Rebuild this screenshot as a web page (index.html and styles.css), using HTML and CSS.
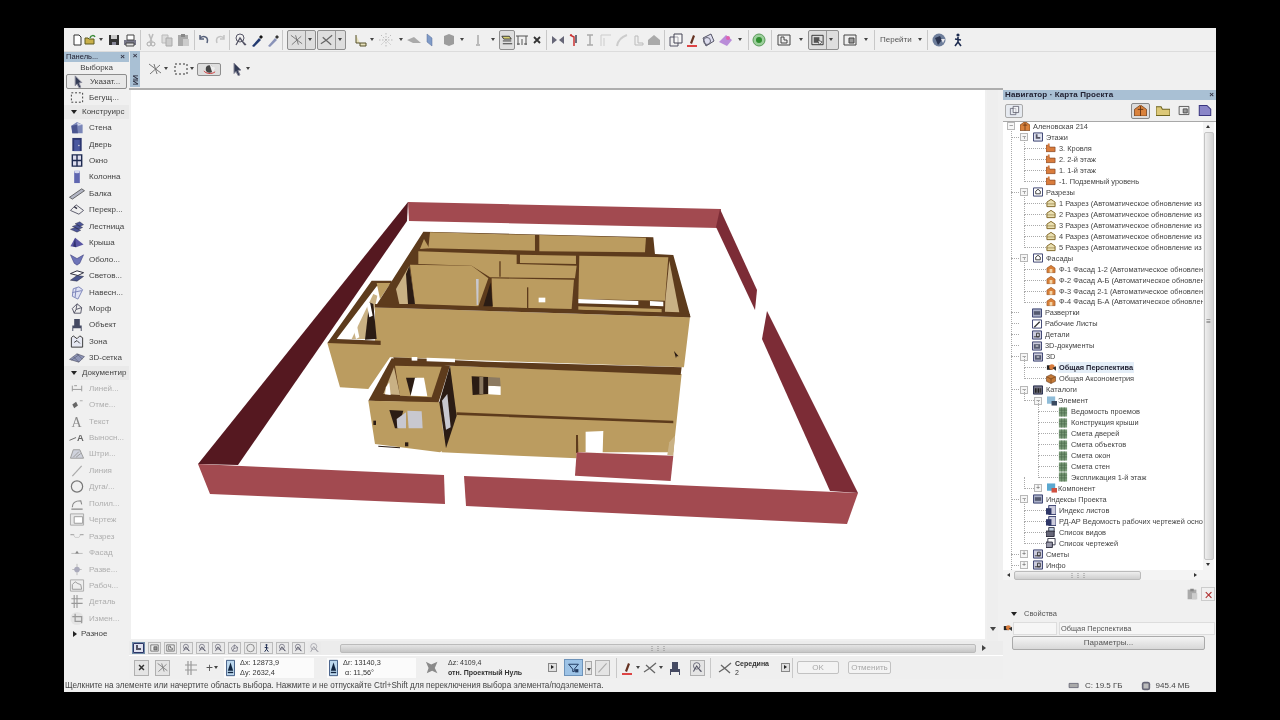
FILE: index.html
```html
<!DOCTYPE html>
<html lang="ru">
<head>
<meta charset="utf-8">
<title>ARCHICAD</title>
<link rel="stylesheet" href="styles.css">
</head>
<body>
<svg class="defs" width="0" height="0" aria-hidden="true">
<defs>
<symbol id="new" viewBox="0 0 16 16"><path d="M5 3h5l2 2v8H5z" fill="#fff" stroke="#333"/></symbol>
<symbol id="open" viewBox="0 0 16 16"><path d="M3 12V6h3l1 1h5v5z" fill="#c9b04a" stroke="#5d5a20"/><path d="M8 6c1-3 4-3 5-1" fill="none" stroke="#3a8a3a" stroke-width="1.5"/></symbol>
<symbol id="save" viewBox="0 0 16 16"><path d="M3 3h10v10H3z" fill="#333"/><path d="M5 3h6v4H5z" fill="#ccc"/><path d="M6 10h4v3H6z" fill="#889"/></symbol>
<symbol id="print" viewBox="0 0 16 16"><path d="M2 8h12v5H2z" fill="#778"/><path d="M5 3h7v5H5z" fill="#fff" stroke="#444"/><path d="M4 11h8v3H4z" fill="#ddd" stroke="#444"/></symbol>
<symbol id="cut" viewBox="0 0 16 16"><path d="M6 2l3 8M10 2L7 10" stroke="#bbb" stroke-width="1.5"/><circle cx="6" cy="12" r="2" fill="none" stroke="#aaa"/><circle cx="10" cy="12" r="2" fill="none" stroke="#aaa"/></symbol>
<symbol id="copy" viewBox="0 0 16 16"><path d="M3 3h6v8H3z" fill="#ddd" stroke="#bbb"/><path d="M7 6h6v8H7z" fill="#ccc" stroke="#aaa"/></symbol>
<symbol id="paste" viewBox="0 0 16 16"><path d="M3 3h10v11H3z" fill="#aaa"/><path d="M6 2h4v3H6z" fill="#888"/><path d="M8 7h6v7H8z" fill="#ccc"/></symbol>
<symbol id="undo" viewBox="0 0 16 16"><path d="M4 6c4-3 9-1 7 5M4 3v4h4" fill="none" stroke="#56607a" stroke-width="1.5"/></symbol>
<symbol id="redo" viewBox="0 0 16 16"><path d="M12 6C8 3 3 5 5 11M12 3v4H8" fill="none" stroke="#c4c4c4" stroke-width="1.5"/></symbol>
<symbol id="find" viewBox="0 0 16 16"><circle cx="7" cy="6" r="4" fill="none" stroke="#556"/><path d="M3 13l4-7 5 7M9 9l4 4" fill="none" stroke="#556" stroke-width="1.3"/></symbol>
<symbol id="pick" viewBox="0 0 16 16"><path d="M3 14l7-8 2 2-7 7z" fill="#223a70"/><path d="M10 5l2-2 2 2-2 2z" fill="#111"/></symbol>
<symbol id="pick2" viewBox="0 0 16 16"><path d="M3 14l7-8 2 2-7 7z" fill="#8a93b8"/><path d="M10 5l2-2 2 2-2 2z" fill="#333"/></symbol>
<symbol id="sel1" viewBox="0 0 16 16"><path d="M2 3l12 9M3 13L13 4M7 3l3 10" stroke="#777" fill="none"/></symbol>
<symbol id="sel2" viewBox="0 0 16 16"><path d="M2 12l6-4 6-5M4 5l9 8" stroke="#666" fill="none" stroke-width="1.3"/></symbol>
<symbol id="bb1" viewBox="0 0 16 16"><path d="M3 3v8h10v3H7v-3" fill="#e6e0bb" stroke="#55502a"/></symbol>
<symbol id="dots" viewBox="0 0 16 16"><path d="M8 1v14M1 8h14M3 3l10 10M13 3L3 13" stroke="#bbb" stroke-dasharray="1.5 1.5"/></symbol>
<symbol id="par" viewBox="0 0 16 16"><path d="M1 8l7-3 7 6H7z" fill="#aaa"/></symbol>
<symbol id="blue" viewBox="0 0 16 16"><path d="M5 2l5 4v8l-5-4z" fill="#7f9bc8" stroke="#5a6f98" stroke-width=".5"/></symbol>
<symbol id="cube" viewBox="0 0 16 16"><path d="M3 4l5-2 5 2v8l-5 2-5-2z" fill="#9c9c9c"/></symbol>
<symbol id="orbit" viewBox="0 0 16 16"><circle cx="8" cy="8" r="4" fill="#444"/><path d="M8 3l6 4-3 5z" fill="#eee"/><path d="M2 10c2 3 8 4 12 1" fill="none" stroke="#c33"/></symbol>
<symbol id="tiny" viewBox="0 0 16 16"><path d="M8 3v10M6 13h4" stroke="#bbb" stroke-width="2"/></symbol>
<symbol id="layer" viewBox="0 0 16 16"><path d="M2 4h8l2 3H4zM3 9h9M3 12h10" fill="#d8d070" stroke="#333"/></symbol>
<symbol id="frame" viewBox="0 0 16 16"><path d="M2 4h12M4 4v9M12 4v9M8 7v6" stroke="#555" fill="none"/><path d="M3 12h3M10 12h3" stroke="#555"/></symbol>
<symbol id="xx" viewBox="0 0 16 16"><path d="M5 5l6 6M11 5l-6 6" stroke="#333" stroke-width="1.8"/></symbol>
<symbol id="w1" viewBox="0 0 16 16"><path d="M2 4l5 4-5 4zM14 4L9 8l5 4z" fill="#667"/></symbol>
<symbol id="w2" viewBox="0 0 16 16"><path d="M4 3l4 2v9M4 3h2" stroke="#c33" fill="none" stroke-width="1.5"/><path d="M10 3v8" stroke="#445" stroke-width="1.5"/></symbol>
<symbol id="w3" viewBox="0 0 16 16"><path d="M5 3h6M8 3v10M5 13h6" stroke="#aaa" stroke-width="1.5"/></symbol>
<symbol id="w4" viewBox="0 0 16 16"><path d="M3 14V3h10M6 14V6" stroke="#ccc" fill="none"/></symbol>
<symbol id="w5" viewBox="0 0 16 16"><path d="M3 14c1-6 4-9 10-11" stroke="#ccc" fill="none" stroke-width="2"/></symbol>
<symbol id="w6" viewBox="0 0 16 16"><path d="M5 4h3v7h5v2H5z" fill="none" stroke="#bbb"/></symbol>
<symbol id="w7" viewBox="0 0 16 16"><path d="M2 8l6-5 6 5v5H2z" fill="#aaa"/></symbol>
<symbol id="v1" viewBox="0 0 16 16"><path d="M2 5h8v9H2z" fill="none" stroke="#556"/><path d="M6 2h8v9H6z" fill="#fff" fill-opacity=".5" stroke="#445"/></symbol>
<symbol id="v2" viewBox="0 0 16 16"><path d="M3 14h10" stroke="#d44" stroke-width="2"/><path d="M6 11l3-8 2 1-3 8z" fill="#632"/></symbol>
<symbol id="v3" viewBox="0 0 16 16"><path d="M3 6l8-4 3 7-8 5z" fill="#dde" stroke="#556"/><circle cx="7" cy="9" r="3.5" fill="none" stroke="#667"/></symbol>
<symbol id="v4" viewBox="0 0 16 16"><path d="M2 10l7-7 6 5-5 6z" fill="#b98cd8"/><circle cx="11" cy="6" r="2" fill="#e060b0"/></symbol>
<symbol id="go" viewBox="0 0 16 16"><circle cx="8" cy="8" r="6" fill="#9ccf9c" stroke="#5a9a5a"/><circle cx="8" cy="8" r="3" fill="#2f8f2f"/></symbol>
<symbol id="f1" viewBox="0 0 16 16"><path d="M2 3h12v10H2z" fill="#eee" stroke="#444"/><path d="M5 5v6h6V8H8V5z" fill="none" stroke="#444"/></symbol>
<symbol id="f2" viewBox="0 0 16 16"><path d="M2 3h12v10H2z" fill="#ddd" stroke="#333"/><path d="M4 5h6v6H4z" fill="#555"/><path d="M8 8l5 2-3 3z" fill="#eee" stroke="#333" stroke-width=".7"/></symbol>
<symbol id="f3" viewBox="0 0 16 16"><path d="M2 3h12v10H2z" fill="#eee" stroke="#444"/><path d="M7 6h5v5H7z" fill="#999" stroke="#444"/></symbol>
<symbol id="earth" viewBox="0 0 16 16"><circle cx="8" cy="8" r="6.5" fill="#6d7d9a"/><path d="M4 6l5-2 2 4-4 5z" fill="#2a3450"/><path d="M10 7h4l-2 4z" fill="#e9e9ee"/></symbol>
<symbol id="walk" viewBox="0 0 16 16"><circle cx="8" cy="3" r="1.6" fill="#1e2c50"/><path d="M8 5v5l-3 4M8 10l3 4M5 7l6 1" stroke="#1e2c50" stroke-width="1.6" fill="none"/></symbol>
<symbol id="cursor" viewBox="0 0 16 16"><path d="M5 2l7 7-3 .5L11 14l-2 .5-2-4-2 2z" fill="#333b55" stroke="#889"/></symbol>
<symbol id="marq" viewBox="0 0 16 16"><path d="M2 3h12v10H2z" fill="none" stroke="#333" stroke-dasharray="2 2"/></symbol>
<symbol id="wall" viewBox="0 0 16 16"><path d="M2 6l6-4 6 3v9H3z" fill="#7a86b8"/><path d="M2 6l6-1 1 9H3z" fill="#4a5590"/><path d="M8 3l6 2-5 1z" fill="#cfd4e8"/></symbol>
<symbol id="door" viewBox="0 0 16 16"><path d="M3 1h10v14H3z" fill="#2c3670"/><path d="M5 3h6v12H5z" fill="#4a58a0"/><circle cx="10" cy="9" r=".8" fill="#ddd"/></symbol>
<symbol id="win" viewBox="0 0 16 16"><path d="M3 2h10v12H3z" fill="#dde" stroke="#1e2a50" stroke-width="1.5"/><path d="M8 2v12M3 8h10" stroke="#1e2a50" stroke-width="1.5"/></symbol>
<symbol id="col" viewBox="0 0 16 16"><path d="M5 2h6v13H5z" fill="#5f66b0"/><ellipse cx="8" cy="2.8" rx="3" ry="1.8" fill="#d5d8ee"/></symbol>
<symbol id="beam" viewBox="0 0 16 16"><path d="M0 12L13 3l3 2L3 14z" fill="#b3b6c4" stroke="#333" stroke-width=".7"/></symbol>
<symbol id="slab" viewBox="0 0 16 16"><path d="M1 9l6-6 8 6-5 4z" fill="#eee" stroke="#556" stroke-width="1"/><path d="M5 5l3 2" stroke="#334" stroke-width="1.5"/></symbol>
<symbol id="stair" viewBox="0 0 16 16"><path d="M1 11l5-2 6 3-4 2zM3 8l5-2 6 3-4 2zM6 5l5-2 4 3-4 2z" fill="#4c5598" stroke="#223" stroke-width=".4"/></symbol>
<symbol id="roof" viewBox="0 0 16 16"><path d="M1 12l5-9 9 7-8 3z" fill="#5a56a4"/><path d="M6 3l-2 9 3 1z" fill="#2f3070"/></symbol>
<symbol id="shell" viewBox="0 0 16 16"><path d="M1 3l7 4 7-4-4 9-3 2-3-2z" fill="#6d74b8" stroke="#2f3070" stroke-width=".5"/></symbol>
<symbol id="sky" viewBox="0 0 16 16"><path d="M1 6l7-3 7 2-6 3z" fill="#fff" stroke="#223" /><path d="M1 13l7-5 7 1-7 5z" fill="#4a5590" stroke="#223" stroke-width=".5"/></symbol>
<symbol id="curt" viewBox="0 0 16 16"><path d="M4 4l6-2 4 3-5 10-6-3z" fill="#dfe2f4" stroke="#7a82b8"/><path d="M7 3l-1 10M3 8l10-2" stroke="#7a82b8"/></symbol>
<symbol id="morph" viewBox="0 0 16 16"><path d="M3 8l5-5 5 4-1 6H5z" fill="#eee" stroke="#556"/><path d="M8 3l-1 6 6-2M7 9l-2 4" stroke="#556" fill="none"/></symbol>
<symbol id="obj" viewBox="0 0 16 16"><path d="M5 2h6v7h2v6h-1v-3H4v3H3V9h2z" fill="#454a62"/></symbol>
<symbol id="zone" viewBox="0 0 16 16"><path d="M2 4l2-2 4 3 3-3 3 2v10H2z" fill="#e6e8f2" stroke="#333"/><path d="M5 9l3-2 3 3" stroke="#333" fill="none"/></symbol>
<symbol id="mesh" viewBox="0 0 16 16"><path d="M0 10l8-6 8 3-6 6z" fill="#8f96b8" stroke="#334" stroke-width=".5"/><path d="M4 7l6 6M8 4l6 6M2 11l8-6" stroke="#334" stroke-width=".4"/></symbol>
<symbol id="dim" viewBox="0 0 16 16"><path d="M3 5v6M13 5v6M3 9h10M5 5h3" stroke="#999" fill="none"/></symbol>
<symbol id="lvl" viewBox="0 0 16 16"><path d="M3 8l4-3 2 4-4 3z" fill="#666"/><path d="M11 4h3" stroke="#aaa"/></symbol>
<symbol id="ttxt" viewBox="0 0 16 16"><text x="2" y="14" font-family="Liberation Serif,serif" font-size="15" fill="#888">A</text></symbol>
<symbol id="lab" viewBox="0 0 16 16"><text x="8" y="12" font-family="Liberation Sans,sans-serif" font-weight="700" font-size="10" fill="#666">A</text><path d="M0 11l7-3" stroke="#666"/></symbol>
<symbol id="hatch" viewBox="0 0 16 16"><path d="M1 13l3-9h7l4 9z" fill="#cfd2dc" stroke="#999"/><path d="M4 12l6-6M7 12l5-4" stroke="#999"/></symbol>
<symbol id="line" viewBox="0 0 16 16"><path d="M3 14L13 3" stroke="#aaa" stroke-width="1.3"/></symbol>
<symbol id="arc" viewBox="0 0 16 16"><circle cx="8" cy="8" r="6" fill="none" stroke="#777" stroke-width="1.3"/></symbol>
<symbol id="poly" viewBox="0 0 16 16"><path d="M2 14h12M3 12c0-5 3-7 9-7l1 4" fill="none" stroke="#888" stroke-width="1.2"/></symbol>
<symbol id="draw" viewBox="0 0 16 16"><path d="M1 2h14v12H1z" fill="#e8e8e8" stroke="#aaa"/><path d="M5 5h9v7H5z" fill="#fff" stroke="#999"/></symbol>
<symbol id="sect" viewBox="0 0 16 16"><path d="M1 6h4M11 6h4" stroke="#aaa" stroke-width="1.4"/><path d="M4 6l2 3h4l2-3" stroke="#ccc" fill="none"/></symbol>
<symbol id="elev" viewBox="0 0 16 16"><path d="M2 9h12" stroke="#bbb"/><path d="M6 9l2-3 2 3z" fill="#888"/></symbol>
<symbol id="int" viewBox="0 0 16 16"><path d="M8 2v12M3 8h10" stroke="#bbb"/><circle cx="8" cy="8" r="3" fill="#aab"/></symbol>
<symbol id="work" viewBox="0 0 16 16"><path d="M1 2h14v12H1z" fill="#eee" stroke="#aaa"/><path d="M3 12V7l3-3 3 2 3 1 1 5z" fill="none" stroke="#999"/></symbol>
<symbol id="det" viewBox="0 0 16 16"><path d="M5 1v14M8 1v14M2 5h12M2 10h12" stroke="#999" stroke-width="1.2"/></symbol>
<symbol id="chg" viewBox="0 0 16 16"><circle cx="8" cy="8" r="7" fill="#e4e4e4"/><path d="M3 6h10v7M6 3v8h7" fill="none" stroke="#999" stroke-width="1.3"/></symbol>
<symbol id="fy" viewBox="0 0 11 10"><path d="M0 9V2h4l1 2h6v5z" fill="#dcc878" stroke="#6e6420" stroke-width=".8"/></symbol>
<symbol id="pg" viewBox="0 0 11 10"><path d="M1 1h6l3 3v5H1z" fill="#8a86c8" stroke="#3a3680" stroke-width=".8"/></symbol>
<symbol id="fl" viewBox="0 0 11 10"><path d="M0 9V2h3l1 2h6v5z" fill="#d97c3c" stroke="#7c4020" stroke-width=".7"/><path d="M2 2V0h2v3" fill="#d97c3c"/></symbol>
<symbol id="sc" viewBox="0 0 11 10"><path d="M1 4l4.5-3L10 4v5H1z" fill="#e9dfb0" stroke="#7a6020"/><path d="M1 6h9" stroke="#7a6020" stroke-width=".6"/></symbol>
<symbol id="fc" viewBox="0 0 11 10"><path d="M1 4l4.5-3L10 4v5H1z" fill="#d98038" stroke="#8a4a20" stroke-width=".6"/><path d="M4 5h3v4H4z" fill="#f3d5a8"/></symbol>
<symbol id="hm" viewBox="0 0 11 10"><path d="M0 4l5.5-4L11 4v6H0z" fill="#d9823c" stroke="#6e3b15" stroke-width=".7"/><path d="M3 4h5M5.500 1v9" stroke="#5d3010" stroke-width=".8"/></symbol>
<symbol id="b1" viewBox="0 0 11 10"><path d="M.5.500h10v9H.500z" fill="#dfe2ef" stroke="#2d3566"/><path d="M3 2v5h5V5H5V2z" fill="#556"/></symbol>
<symbol id="b2" viewBox="0 0 11 10"><path d="M.5.500h10v9H.500z" fill="#fff" stroke="#2d3566"/><path d="M3 7V4l2.500-2L8 4v3z" fill="none" stroke="#333"/></symbol>
<symbol id="b3" viewBox="0 0 11 10"><path d="M.5.500h10v9H.500z" fill="#aab0c8" stroke="#2d3566"/><path d="M2 3h7v4H2z" fill="#555a70"/></symbol>
<symbol id="b4" viewBox="0 0 11 10"><path d="M.5.500h10v9H.500z" fill="#fff" stroke="#2d3566"/><path d="M2 8l6-6 1 1-6 6z" fill="#333"/></symbol>
<symbol id="b5" viewBox="0 0 11 10"><path d="M.5.500h10v9H.500z" fill="#ccd" stroke="#2d3566"/><path d="M5 7V3h3v4zM2 7h6" stroke="#333" fill="none"/></symbol>
<symbol id="b6" viewBox="0 0 11 10"><path d="M.5.500h10v9H.500z" fill="#ccd" stroke="#2d3566"/><path d="M2 3h7v5H2z" fill="#555a70"/><path d="M4 5h3" stroke="#fff"/></symbol>
<symbol id="b7" viewBox="0 0 11 10"><path d="M.5.500h10v9H.500z" fill="#778" stroke="#1d2344"/><path d="M2 3h2v5H2zM5 3h2v5H5zM8 3h1v5H8z" fill="#222"/></symbol>
<symbol id="cam" viewBox="0 0 11 10"><path d="M1 2h6v5H1z" fill="#222"/><circle cx="6.500" cy="4" r="3" fill="#d97c3c"/><path d="M7 5l4-2v5z" fill="#333"/></symbol>
<symbol id="axo" viewBox="0 0 11 10"><path d="M5.500 0l5 2.500v5l-5 2.500-5-2.500v-5z" fill="#c47a38" stroke="#5d3010" stroke-width=".6"/><path d="M.5 2.500l5 2.500 5-2.500M5.500 5v5" stroke="#5d3010" stroke-width=".6" fill="none"/></symbol>
<symbol id="grid" viewBox="0 0 11 10"><path d="M1 0h9v10H1z" fill="#7a9a78"/><path d="M1 3h9M1 6h9M4 0v10M7 0v10" stroke="#486648" stroke-width=".7"/></symbol>
<symbol id="el" viewBox="0 0 11 10"><path d="M0 0h9v8H0z" fill="#8fbcd8"/><path d="M5 5h6v5H5z" fill="#3a4a60"/></symbol>
<symbol id="cp" viewBox="0 0 11 10"><path d="M0 0h9v8H0z" fill="#5aa8d0"/><path d="M5 5h6v5H5z" fill="#d05040"/></symbol>
<symbol id="ix" viewBox="0 0 11 10"><path d="M3 0h8v10H3z" fill="#ccd" stroke="#2d3566"/><path d="M0 3h6v7H0z" fill="#2d3566"/></symbol>
<symbol id="vl" viewBox="0 0 11 10"><path d="M3 0h6v5H3z" fill="#bcd" stroke="#334"/><path d="M0 4h9v6H0z" fill="#667" stroke="#223"/></symbol>
<symbol id="dl" viewBox="0 0 11 10"><path d="M2 0h8v7H2z" fill="#fff" stroke="#334"/><path d="M0 4h7v6H0z" fill="#99a" stroke="#223"/></symbol>
<symbol id="mark" viewBox="0 0 10 18"><path d="M.5.500h9v17h-9z" fill="#bcd8ee" stroke="#34507a"/><path d="M5 3l3 9H2z" fill="#10243f"/><path d="M2 14h6" stroke="#10243f" stroke-width="1.5"/></symbol>
<symbol id="star" viewBox="0 0 20 18"><path d="M2 2l6 3 7-3-3 7 3 6-6-3-6 3 2-6z" fill="#8a8a8a"/></symbol>
<symbol id="mag" viewBox="0 0 16 16"><path d="M2 4h12l-5 6v3H7v-3z" fill="none" stroke="#223a60" stroke-width="1.2"/><path d="M10 10h4v4h-4z" fill="#223a60"/></symbol>
<symbol id="sc-d" viewBox="0 0 16 10"><path d="M1 2h13v6H1z" fill="#aaa" stroke="#556"/></symbol>
<symbol id="sc-r" viewBox="0 0 12 12"><rect x="1" y="1" width="10" height="10" rx="3" fill="#667"/><rect x="3" y="3" width="6" height="6" fill="#bbb"/></symbol>
</defs>
</svg>

<main class="app">
  <header class="topbar">
    <svg class="t"><use href="#new"/></svg>
    <svg class="t n"><use href="#open"/></svg><i class="a"></i>
    <svg class="t ml1"><use href="#save"/></svg>
    <svg class="t"><use href="#print"/></svg>
    <b class="s ml2 mr2"></b>
    <svg class="t"><use href="#cut"/></svg>
    <svg class="t"><use href="#copy"/></svg>
    <svg class="t"><use href="#paste"/></svg>
    <b class="s ml3"></b>
    <svg class="t ml1"><use href="#undo"/></svg>
    <svg class="t"><use href="#redo"/></svg>
    <b class="s ml1 mr3"></b>
    <svg class="t"><use href="#find"/></svg>
    <svg class="t"><use href="#pick"/></svg>
    <svg class="t"><use href="#pick2"/></svg>
    <b class="s ml1"></b>
    <span class="press ml4"><svg class="t"><use href="#sel1"/></svg><i class="div"></i><i class="a"></i></span>
    <span class="press ml1"><svg class="t"><use href="#sel2"/></svg><i class="div"></i><i class="a"></i></span>
    <svg class="t ml7"><use href="#bb1"/></svg><i class="a"></i>
    <svg class="t ml2"><use href="#dots"/></svg><i class="a ml4"></i>
    <svg class="t ml1"><use href="#par"/></svg>
    <svg class="t"><use href="#blue"/></svg>
    <svg class="t ml3"><use href="#cube"/></svg><i class="a ml2"></i>
    <svg class="t ml4"><use href="#tiny"/></svg><i class="a ml4"></i>
    <span class="press solo ml2"><svg class="t"><use href="#layer"/></svg></span>
    <svg class="t n1"><use href="#frame"/></svg>
    <svg class="t n1"><use href="#xx"/></svg>
    <b class="s ml1 mr3"></b>
    <svg class="t"><use href="#w1"/></svg>
    <svg class="t"><use href="#w2"/></svg>
    <svg class="t"><use href="#w3"/></svg>
    <svg class="t"><use href="#w4"/></svg>
    <svg class="t"><use href="#w5"/></svg>
    <svg class="t"><use href="#w6"/></svg>
    <svg class="t"><use href="#w7"/></svg>
    <b class="s ml2 mr3"></b>
    <svg class="t"><use href="#v1"/></svg>
    <svg class="t"><use href="#v2"/></svg>
    <svg class="t"><use href="#v3"/></svg>
    <svg class="t ml1"><use href="#v4"/></svg><i class="a ml4"></i>
    <b class="s ml4 mr2"></b>
    <svg class="t"><use href="#go"/></svg>
    <b class="s ml4 mr4"></b>
    <svg class="t"><use href="#f1"/></svg><i class="a ml6"></i>
    <span class="press ml3 narrow"><svg class="t"><use href="#f2"/></svg><i class="div"></i><i class="a"></i></span>
    <svg class="t ml3"><use href="#f3"/></svg><i class="a ml5"></i>
    <b class="s ml4"></b>
    <span class="goto ml5">Перейти</span><i class="a ml5"></i>
    <b class="s ml3 mr3"></b>
    <svg class="t"><use href="#earth"/></svg>
    <svg class="t ml3"><use href="#walk"/></svg>
  </header>

  <div class="main">
    <aside class="palette">
      <div class="pal-title"><span>Панель...</span><span class="close">×</span></div>
      <div class="pal-sub">Выборка</div>
      <div class="tool sel"><svg><use href="#cursor"/></svg>Указат...</div>
      <div class="tool"><svg><use href="#marq"/></svg>Бегущ...</div>
      <div class="cat open">Конструирс</div>
      <div class="tool"><svg><use href="#wall"/></svg>Стена</div>
      <div class="tool"><svg><use href="#door"/></svg>Дверь</div>
      <div class="tool"><svg><use href="#win"/></svg>Окно</div>
      <div class="tool"><svg><use href="#col"/></svg>Колонна</div>
      <div class="tool"><svg><use href="#beam"/></svg>Балка</div>
      <div class="tool"><svg><use href="#slab"/></svg>Перекр...</div>
      <div class="tool"><svg><use href="#stair"/></svg>Лестница</div>
      <div class="tool"><svg><use href="#roof"/></svg>Крыша</div>
      <div class="tool"><svg><use href="#shell"/></svg>Оболо...</div>
      <div class="tool"><svg><use href="#sky"/></svg>Светов...</div>
      <div class="tool"><svg><use href="#curt"/></svg>Навесн...</div>
      <div class="tool"><svg><use href="#morph"/></svg>Морф</div>
      <div class="tool"><svg><use href="#obj"/></svg>Объект</div>
      <div class="tool"><svg><use href="#zone"/></svg>Зона</div>
      <div class="tool"><svg><use href="#mesh"/></svg>3D-сетка</div>
      <div class="cat open">Документир</div>
      <div class="tool off"><svg><use href="#dim"/></svg>Линей...</div>
      <div class="tool off"><svg><use href="#lvl"/></svg>Отме...</div>
      <div class="tool off"><svg><use href="#ttxt"/></svg>Текст</div>
      <div class="tool off"><svg><use href="#lab"/></svg>Выносн...</div>
      <div class="tool off"><svg><use href="#hatch"/></svg>Штри...</div>
      <div class="tool off"><svg><use href="#line"/></svg>Линия</div>
      <div class="tool off"><svg><use href="#arc"/></svg>Дуга/...</div>
      <div class="tool off"><svg><use href="#poly"/></svg>Полил...</div>
      <div class="tool off"><svg><use href="#draw"/></svg>Чертеж</div>
      <div class="tool off"><svg><use href="#sect"/></svg>Разрез</div>
      <div class="tool off"><svg><use href="#elev"/></svg>Фасад</div>
      <div class="tool off"><svg><use href="#int"/></svg>Разве...</div>
      <div class="tool off"><svg><use href="#work"/></svg>Рабоч...</div>
      <div class="tool off"><svg><use href="#det"/></svg>Деталь</div>
      <div class="tool off"><svg><use href="#chg"/></svg>Измен...</div>
      <div class="cat closed">Разное</div>
    </aside>

    <section class="center">
      <div class="infobox">
        <div class="tab"><span class="close">×</span><span class="tab-name">ИИ</span></div>
        <svg class="t ml7"><use href="#sel1"/></svg><i class="a"></i>
        <svg class="t ml3"><use href="#marq"/></svg><i class="a"></i>
        <span class="press solo wide ml1"><svg class="t"><use href="#orbit"/></svg></span>
        <svg class="t ml8"><use href="#cursor"/></svg><i class="a"></i>
      </div>
      <div class="viewrow">
        <svg class="scene" viewBox="131 91 854 549" role="img" aria-label="3D">
          <polygon class="maroon" points="408,203 407,222 238,466 198,465"/>
          <polygon class="red" points="408,203 721,210 718,229 409,222"/>
          <polygon class="rust" points="720,210 757,291 755,311 716,228"/>
          <polygon class="rust" points="767,312 858,494 830,492 762,340"/>
          <polygon class="red" points="198,465 444,476 445,505 210,495"/>
          <polygon class="red" points="464,477 858,494 847,525 466,507"/>
          <g transform="translate(320 220) scale(.3333)">
            <polygon class="tan" points="22,372 165,372 165,265 1110,295 1092,445 210,415 145,510 60,505"/>
            <polygon class="brn" points="22,372 155,185 215,185 215,197 170,202 50,360 182,365 182,378"/>
            <polygon class="tan" points="170,192 212,192 180,240"/>
            <polygon class="lite" points="160,225 172,230 145,360 95,360"/>
            <polygon class="dark" points="148,250 160,255 170,360 135,362"/>
            <polygon class="white" points="140,255 150,250 158,290 148,295"/>
            <polygon class="white" points="98,320 110,315 118,355 108,360"/>
            <polygon class="brn" points="165,265 310,38 1000,55 1005,105 1060,108 1112,295"/>
            <polygon class="tan" points="330,40 645,48 645,95 325,88"/>
            <polygon class="tan" points="658,48 978,56 975,100 658,97"/>
            <polygon class="tan" points="312,60 328,88 300,90"/>
            <polygon class="tan" points="295,97 590,107 590,135 770,140 765,178 510,175 455,140 295,135"/>
            <polygon class="tan" points="600,107 768,110 768,135 600,132"/>
            <polygon class="tan" points="270,137 455,140 505,178 475,262 285,255"/>
            <polygon class="brn" points="538,127 542,127 542,173 538,173"/>
            <polygon class="tan" points="515,178 762,182 755,270 518,265"/>
            <polygon class="brn" points="621,205 625,205 625,268 621,268"/>
            <polygon class="white" points="656,236 676,236 676,250 656,250"/>
            <polygon class="tan" points="778,110 1045,115 1035,245 775,240"/>
            <polygon class="white" points="775,240 955,246 955,258 775,253"/>
            <polygon class="white" points="990,246 1030,248 1030,262 990,260"/>
            <polygon class="tan" points="775,262 1025,270 1025,280 775,272"/>
            <polygon class="lite" points="1048,125 1078,280 1035,278 1036,245"/>
            <polygon class="lite" points="228,210 268,140 285,255 238,255"/>
            <polygon class="dark" points="258,165 268,140 285,255 264,255"/>
            <polygon class="dark" points="490,262 512,190 518,262"/>
            <polygon class="steel" points="468,180 476,180 475,258 470,258"/>
            <polygon class="brn" points="165,255 480,263 770,272 1110,285 1110,295 770,282 480,272 165,265"/>
            <polygon class="tan" points="390,440 1085,465 1060,700 770,700 770,718 365,700"/>
            <polygon class="brn" points="220,415 500,428 1085,445 1082,468 390,440 225,435"/>
            <polygon class="white" points="320,416 405,419 405,430 320,427"/>
            <polygon class="white" points="275,414 292,414 292,425 275,425"/>
            <polygon class="brn" points="410,580 1060,605 1060,613 410,588"/>
            <polygon class="dark" points="455,472 505,474 505,525 458,528"/>
            <polygon class="win" points="478,474 490,474 490,525 478,525"/>
            <polygon class="white" points="505,500 542,502 542,528 505,526"/>
            <polygon class="win" points="505,474 540,476 542,502 505,500"/>
            <polygon class="brn" points="145,545 215,418 390,440 355,552"/>
            <polygon class="tan" points="225,440 365,443 335,535 240,530"/>
            <polygon class="lite" points="190,525 222,445 240,528"/>
            <polygon class="dark" points="258,476 290,476 272,530"/>
            <polygon class="white" points="285,476 312,476 322,532 272,530"/>
            <polygon class="white" points="198,505 208,490 212,528 195,526"/>
            <polygon class="tan" points="145,545 360,550 375,690 360,700 165,675"/>
            <polygon class="dark" points="358,550 390,440 410,590 378,688"/>
            <polygon class="steel" points="366,545 382,525 392,625 378,632"/>
            <polygon class="dark" points="208,573 250,575 235,628 225,628"/>
            <polygon class="steel" points="230,600 258,580 258,628 232,628"/>
            <polygon class="steel" points="262,575 305,577 308,628 266,628"/>
            <polygon class="white" points="797,638 850,636 848,702 797,700"/>
            <polygon class="brn" points="768,648 774,648 775,702 768,702"/>
            <polygon class="red" points="770,700 1060,710 1052,786 765,770"/>
            <polygon class="lite" points="1048,670 1065,650 1060,710 1042,708"/>
            <polygon class="dark" points="1062,396 1076,412 1070,412 1068,418"/>
            <polygon class="dark" points="160,605 168,605 168,618 160,618"/>
            <polygon class="dark" points="175,680 240,685 240,688 175,683"/>
            <polygon class="dark" points="255,670 265,670 265,682 255,682"/>
          </g>
        </svg>
        <div class="vscroll"><i class="arrow-d"></i></div>
      </div>
      <div class="hbar">
        <svg class="z mode"><use href="#b1"/></svg>
        <svg class="z"><use href="#f3"/></svg>
        <svg class="z"><use href="#f1"/></svg>
        <svg class="z"><use href="#find"/></svg>
        <svg class="z"><use href="#find"/></svg>
        <svg class="z"><use href="#find"/></svg>
        <svg class="z"><use href="#morph"/></svg>
        <svg class="z"><use href="#arc"/></svg>
        <svg class="z"><use href="#walk"/></svg>
        <svg class="z"><use href="#find"/></svg>
        <svg class="z"><use href="#find"/></svg>
        <svg class="z dim"><use href="#find"/></svg>
        <div class="track"><i class="thumb">⋮⋮⋮</i></div>
        <i class="arrow-r"></i>
      </div>
      <div class="coord">
        <span class="cbtn"><svg><use href="#xx"/></svg></span>
        <span class="cbtn"><svg><use href="#sel1"/></svg></span>
        <svg class="t ml7"><use href="#det"/></svg>
        <span class="plus">+</span><i class="a"></i>
        <div class="field f1"><svg><use href="#mark"/></svg><p>Δx: 12873,9<br>Δy: 2632,4</p></div>
        <div class="field f2"><svg><use href="#mark"/></svg><p>Δr: 13140,3<br>&nbsp;α: 11,56°</p></div>
        <div class="origin"><svg><use href="#star"/></svg><p>Δz: 4109,4<br><b>отн. Проектный Нуль</b></p><i class="mini"></i></div>
        <span class="cbtn blue"><svg><use href="#mag"/></svg></span><i class="a bx"></i>
        <span class="cbtn tight"><svg><use href="#line"/></svg></span>
        <b class="s ml6 mr2"></b>
        <svg class="t"><use href="#v2"/></svg><i class="a"></i>
        <svg class="t"><use href="#sel2"/></svg><i class="a"></i>
        <svg class="t ml2"><use href="#obj"/></svg>
        <span class="cbtn tight ml7"><svg><use href="#find"/></svg></span>
        <b class="s ml5"></b>
        <svg class="t ml6"><use href="#sel2"/></svg>
        <div class="snap"><b>Середина</b><span>2</span></div><i class="mini"></i>
        <b class="s ml2"></b>
        <span class="pbtn ok">OK</span>
        <span class="pbtn cancel">Отменить</span>
      </div>
    </section>

    <aside class="nav">
      <div class="nav-title"><span>Навигатор · Карта Проекта</span><span class="close">×</span></div>
      <div class="nav-tools">
        <span class="pop"><svg><use href="#v1"/></svg></span><i class="fill"></i>
        <span class="pop on"><svg><use href="#hm"/></svg></span>
        <svg class="t"><use href="#fy"/></svg>
        <svg class="t"><use href="#f3"/></svg>
        <svg class="t"><use href="#pg"/></svg>
      </div>
      <div class="tree-box">
        <div class="tree">
          <div class="r l0"><i class="x">−</i><svg><use href="#hm"/></svg><span>Аленовская 214</span></div>
          <div class="r l1"><i class="x">−</i><svg><use href="#b1"/></svg><span>Этажи</span></div>
          <div class="r l2"><svg><use href="#fl"/></svg><span>3. Кровля</span></div>
          <div class="r l2"><svg><use href="#fl"/></svg><span>2. 2-й этаж</span></div>
          <div class="r l2"><svg><use href="#fl"/></svg><span>1. 1-й этаж</span></div>
          <div class="r l2"><svg><use href="#fl"/></svg><span>-1. Подземный уровень</span></div>
          <div class="r l1"><i class="x">−</i><svg><use href="#b2"/></svg><span>Разрезы</span></div>
          <div class="r l2"><svg><use href="#sc"/></svg><span>1 Разрез (Автоматическое обновление из</span></div>
          <div class="r l2"><svg><use href="#sc"/></svg><span>2 Разрез (Автоматическое обновление из</span></div>
          <div class="r l2"><svg><use href="#sc"/></svg><span>3 Разрез (Автоматическое обновление из</span></div>
          <div class="r l2"><svg><use href="#sc"/></svg><span>4 Разрез (Автоматическое обновление из</span></div>
          <div class="r l2"><svg><use href="#sc"/></svg><span>5 Разрез (Автоматическое обновление из</span></div>
          <div class="r l1"><i class="x">−</i><svg><use href="#b2"/></svg><span>Фасады</span></div>
          <div class="r l2"><svg><use href="#fc"/></svg><span>Ф-1 Фасад 1-2 (Автоматическое обновлен</span></div>
          <div class="r l2"><svg><use href="#fc"/></svg><span>Ф-2 Фасад А-Б (Автоматическое обновлен</span></div>
          <div class="r l2"><svg><use href="#fc"/></svg><span>Ф-3 Фасад 2-1 (Автоматическое обновлен</span></div>
          <div class="r l2"><svg><use href="#fc"/></svg><span>Ф-4 Фасад Б-А (Автоматическое обновлен</span></div>
          <div class="r l1 leaf"><svg><use href="#b3"/></svg><span>Развертки</span></div>
          <div class="r l1 leaf"><svg><use href="#b4"/></svg><span>Рабочие Листы</span></div>
          <div class="r l1 leaf"><svg><use href="#b5"/></svg><span>Детали</span></div>
          <div class="r l1 leaf"><svg><use href="#b6"/></svg><span>3D-документы</span></div>
          <div class="r l1"><i class="x">−</i><svg><use href="#b6"/></svg><span>3D</span></div>
          <div class="r l2"><svg><use href="#cam"/></svg><span class="cur">Общая Перспектива</span></div>
          <div class="r l2"><svg><use href="#axo"/></svg><span>Общая Аксонометрия</span></div>
          <div class="r l1"><i class="x">−</i><svg><use href="#b7"/></svg><span>Каталоги</span></div>
          <div class="r l2b"><i class="x">−</i><svg><use href="#el"/></svg><span>Элемент</span></div>
          <div class="r l3"><svg><use href="#grid"/></svg><span>Ведомость проемов</span></div>
          <div class="r l3"><svg><use href="#grid"/></svg><span>Конструкция крыши</span></div>
          <div class="r l3"><svg><use href="#grid"/></svg><span>Смета дверей</span></div>
          <div class="r l3"><svg><use href="#grid"/></svg><span>Смета объектов</span></div>
          <div class="r l3"><svg><use href="#grid"/></svg><span>Смета окон</span></div>
          <div class="r l3"><svg><use href="#grid"/></svg><span>Смета стен</span></div>
          <div class="r l3"><svg><use href="#grid"/></svg><span>Экспликация 1-й этаж</span></div>
          <div class="r l2b"><i class="x">+</i><svg><use href="#cp"/></svg><span>Компонент</span></div>
          <div class="r l1"><i class="x">−</i><svg><use href="#b3"/></svg><span>Индексы Проекта</span></div>
          <div class="r l2"><svg><use href="#ix"/></svg><span>Индекс листов</span></div>
          <div class="r l2"><svg><use href="#ix"/></svg><span>РД-АР Ведомость рабочих чертежей осно</span></div>
          <div class="r l2"><svg><use href="#vl"/></svg><span>Список видов</span></div>
          <div class="r l2"><svg><use href="#dl"/></svg><span>Список чертежей</span></div>
          <div class="r l1"><i class="x">+</i><svg><use href="#b5"/></svg><span>Сметы</span></div>
          <div class="r l1"><i class="x">+</i><svg><use href="#b5"/></svg><span>Инфо</span></div>
        </div>
        <div class="tree-v"><i class="up"></i><i class="vthumb">≡</i><i class="down"></i></div>
      </div>
      <div class="tree-h"><i class="left"></i><i class="hthumb">⋮⋮⋮</i><i class="right"></i></div>
      <div class="nav-act"><svg><use href="#paste"/></svg><span class="del">✕</span></div>
      <div class="props"><i class="tri"></i>Свойства</div>
      <div class="propline"><svg><use href="#cam"/></svg><span class="in short"></span><span class="in long">Общая Перспектива</span></div>
      <div class="pbtn params">Параметры...</div>
    </aside>
  </div>

  <footer class="status">
    <span class="msg">Щелкните на элементе или начертите область выбора. Нажмите и не отпускайте Ctrl+Shift для переключения выбора элемента/подэлемента.</span>
    <span class="disk"><svg><use href="#sc-d"/></svg>C: 19.5 ГБ</span>
    <span class="ram"><svg><use href="#sc-r"/></svg>945.4 МБ</span>
  </footer>
</main>
</body>
</html>
```

FILE: styles.css
```css
* { box-sizing: border-box; }
html, body { margin: 0; height: 100%; background: #000; overflow: hidden; }
body { font-family: "Liberation Sans", Arial, sans-serif; font-size: 8px; color: #333; }
.defs { position: absolute; }
i { font-style: normal; }
p { margin: 0; }

.app { width: 1152px; height: 664px; margin: 28px 0 0 64px; background: #f0f0f0; display: flex; flex-direction: column; filter: blur(.45px); }

.topbar { height: 24px; padding-left: 5px; display: flex; align-items: center; flex: none; border-bottom: 1px solid #dcdcdc; }
.t { width: 16px; height: 16px; flex: none; }
.n { margin-left: -3px; }
.n1 { margin-left: -1px; }
.a { width: 7px; height: 16px; flex: none; position: relative; }
.a::after { content: ""; position: absolute; left: 1px; top: 6px; border: 2.5px solid transparent; border-top: 3px solid #444; border-bottom: 0; }
.s { width: 1px; height: 20px; background: #c8c8c8; flex: none; }
.ml1 { margin-left: 1px; } .ml2 { margin-left: 2px; } .ml3 { margin-left: 3px; } .ml4 { margin-left: 4px; }
.ml5 { margin-left: 5px; } .ml6 { margin-left: 6px; } .ml7 { margin-left: 7px; } .ml8 { margin-left: 8px; }
.mr2 { margin-right: 2px; } .mr3 { margin-right: 3px; } .mr4 { margin-right: 4px; }
.press { width: 29px; height: 20px; display: flex; align-items: center; padding-left: 1px; background: #dedede; border: 1px solid #8e8e8e; border-radius: 2px; flex: none; }
.press.solo { width: 16px; padding: 0; justify-content: center; }
.press.wide { width: 24px; height: 13px; }
.press.narrow { width: 31px; }
.press .t { width: 15px; }
.div { width: 1px; height: 18px; background: #999; flex: none; margin: 0 1px; }
.goto { width: 32px; font-size: 8px; color: #555; flex: none; }

.main { flex: 1; display: flex; min-height: 0; }

.palette { width: 65px; flex: none; background: #f0f0f0; }
.pal-title { height: 10px; background: #a9c0d4; display: flex; justify-content: space-between; padding: 0 4px 0 2px; font-size: 7.5px; line-height: 10px; color: #223; }
.close { font-weight: 700; color: #334; font-size: 8px; }
.pal-sub { height: 12px; text-align: center; line-height: 12px; color: #444; }
.tool { height: 16.45px; display: flex; align-items: center; padding-left: 5px; color: #444; white-space: nowrap; font-size: 8px; }
.tool svg { width: 16px; height: 15px; margin-right: 4px; flex: none; }
.tool.sel { margin: 0 2px; padding-left: 3px; height: 15px; border: 1px solid #8d8d8d; border-radius: 2px; background: #e8e8e8; }
.tool.off { color: #aeaeae; }
.cat { height: 14px; line-height: 14px; padding-left: 18px; position: relative; color: #444; background: #e9e9e9; font-size: 8px; white-space: nowrap; overflow: hidden; }
.cat::before { content: ""; position: absolute; left: 7px; top: 5px; border: 3px solid transparent; border-top: 4px solid #222; border-bottom: 0; }
.cat.closed { background: none; padding-left: 17px; }
.cat.closed::before { left: 9px; top: 4px; border: 3px solid transparent; border-left: 4px solid #222; border-right: 0; }

.center { width: 874px; flex: none; display: flex; flex-direction: column; }
.infobox { height: 38px; display: flex; align-items: center; flex: none; padding-bottom: 2px; border-bottom: 2px solid #aeaeae; background: #f0f0f0; }
.tab { width: 10px; height: 36px; background: #a9c0d4; margin-left: 1px; display: flex; flex-direction: column; align-items: center; justify-content: space-between; flex: none; }
.tab .close { line-height: 10px; }
.tab-name { font-weight: 700; font-size: 7px; color: #223; writing-mode: vertical-rl; transform: rotate(180deg); padding-top: 2px; }
.viewrow { flex: 1; display: flex; min-height: 0; padding-left: 2px; }
.scene { width: 854px; height: 549px; background: #fff; flex: none; display: block; }
.vscroll { width: 11px; margin-left: 2px; background: #eee; position: relative; }
.arrow-d { position: absolute; left: 3px; bottom: 10px; border: 3px solid transparent; border-top: 4px solid #444; border-bottom: 0; }
.tan { fill: #bb9c60; } .brn { fill: #5d3b1c; } .dark { fill: #2b1c14; } .white { fill: #fff; }
.lite { fill: #c9b184; } .steel { fill: #c8c8d0; } .win { fill: #8c7a62; }
.red { fill: #a24a50; } .maroon { fill: #551820; } .rust { fill: #7c2c36; }

.hbar { height: 14px; flex: none; display: flex; align-items: center; padding-left: 3px; background: #ececec; }
.z { width: 13px; height: 12px; margin-right: 3px; flex: none; border: 1px solid #bbb; background: #e9e9e9; }
.z.mode { background: #b7cfe0; border-color: #6e8aa6; }
.z.dim { opacity: .5; border: 0; }
.track { width: 636px; height: 9px; margin-left: 16px; background: linear-gradient(#e4e4e4, #c6c6c6); border: 1px solid #bbb; border-radius: 2px; text-align: center; line-height: 7px; font-size: 6px; color: #666; flex: none; }
.thumb { display: block; }
.arrow-r { margin-left: 6px; border: 3px solid transparent; border-left: 4px solid #444; border-right: 0; }

.coord { height: 24px; flex: none; display: flex; align-items: center; padding-left: 5px; background: #efefef; border-top: 1px solid #fff; }
.cbtn { width: 15px; height: 16px; border: 1px solid #b0b0b0; background: #e4e4e4; display: flex; align-items: center; justify-content: center; margin-right: 6px; flex: none; }
.cbtn svg { width: 13px; height: 13px; }
.cbtn.blue { width: 19px; height: 17px; background: #9dc3e6; border-color: #6d93ba; margin: 0 0 0 1px; }
.cbtn.tight { margin-right: 0; }
.bx { margin: 0 3px 0 2px; background: #e4e4e4; border: 1px solid #aaa; height: 14px; }
.plus { margin-left: 7px; font-size: 12px; color: #555; }
.field { height: 20px; display: flex; align-items: center; background: #fbfbfb; font-size: 7.3px; line-height: 9.5px; color: #333; flex: none; }
.field svg { width: 9px; height: 18px; margin: 0 5px 0 2px; flex: none; }
.f1 { width: 90px; margin-left: 4px; }
.f2 { width: 89px; margin-left: 13px; }
.origin { width: 139px; margin-left: 8px; height: 20px; display: flex; align-items: center; font-size: 7px; line-height: 9.5px; color: #333; flex: none; }
.origin svg { width: 18px; height: 16px; margin-right: 6px; }
.origin p { width: 100px; flex: none; }
.origin b, .snap b { font-size: 7px; }
.mini { width: 9px; height: 9px; border: 1px solid #888; background: #e0e0e0; flex: none; position: relative; }
.mini::after { content: ""; position: absolute; left: 2px; top: 1px; border: 2.5px solid transparent; border-left: 3px solid #222; border-right: 0; }
.snap { width: 48px; line-height: 9px; font-size: 7px; color: #333; padding-left: 2px; display: flex; flex-direction: column; flex: none; }
.pbtn { height: 13px; border: 1px solid #c2c2c2; border-radius: 2px; background: #f3f3f3; text-align: center; line-height: 11px; color: #a9a9a9; font-size: 8px; flex: none; }
.ok { width: 42px; margin-left: 4px; }
.cancel { width: 43px; margin-left: 9px; }

.nav { width: 213px; flex: none; display: flex; flex-direction: column; margin-top: 38px; background: #f0f0f0; }
.nav-title { height: 10px; background: #a9c0d4; display: flex; justify-content: space-between; padding: 0 2px 0 2px; line-height: 10px; font-size: 8px; font-weight: 700; letter-spacing: .1px; color: #223; flex: none; }
.nav-tools { height: 21px; display: flex; align-items: center; padding: 0 4px 0 2px; flex: none; }
.fill { flex: 1; }
.nav-tools .t { width: 14px; height: 13px; margin-left: 7px; }
.pop { width: 18px; height: 14px; border: 1px solid #aaa; border-radius: 2px; background: #e6eaf0; display: flex; align-items: center; justify-content: center; }
.pop svg { width: 13px; height: 11px; }
.pop.on { width: 19px; height: 16px; background: #dcdcdc; border-color: #888; margin-right: -1px; }
.tree-box { height: 449px; display: flex; flex: none; background: #fff; border-top: 1px solid #a8a8a8; overflow: hidden; }
.tree { width: 200px; flex: none; overflow: hidden; margin-top: -1px; background: linear-gradient(#aaa 50%, transparent 50%) 8px 0 / 1px 2px repeat-y; }
.r { height: 10.97px; display: flex; align-items: center; white-space: nowrap; line-height: 11px; position: relative; color: #444; font-size: 7.4px; }
.r svg { width: 10px; height: 10px; margin-right: 3px; flex: none; }
.x { width: 8px; height: 8px; border: 1px solid #b8b8b8; background: #f6f6f6; color: #555; font-size: 7px; line-height: 6px; text-align: center; margin-right: 5px; flex: none; }
.r::before { content: ""; position: absolute; top: -6px; height: 11px; border-left: 1px dotted #aaa; border-bottom: 1px dotted #aaa; }
.l0 { padding-left: 4px; }
.l1 { padding-left: 17px; }
.l1.leaf { padding-left: 29px; }
.l2 { padding-left: 43px; }
.l2b { padding-left: 31px; }
.l2b svg { margin-right: 1px; }
.l3 { padding-left: 55px; }
.l0::before { display: none; }
.l1::before { left: 8px; width: 8px; border-left: 0; }
.l2::before { left: 21px; width: 21px; }
.l2b::before { left: 21px; width: 9px; }
.l3::before { left: 35px; width: 19px; }
.cur { font-weight: 700; background: #e4eef8; color: #223; margin-left: -1px; padding: 0 1px; }
.tree-v { width: 11px; background: #f4f4f4; position: relative; display: flex; flex-direction: column; align-items: center; }
.up, .down { flex: none; height: 10px; width: 7px; position: relative; }
.up::after { content: ""; position: absolute; left: 1px; top: 3px; border: 2.5px solid transparent; border-bottom: 3px solid #333; border-top: 0; }
.down::after { content: ""; position: absolute; left: 1px; top: 3px; border: 2.5px solid transparent; border-top: 3px solid #333; border-bottom: 0; }
.vthumb { flex: 1; width: 10px; background: linear-gradient(90deg, #eee, #d2d2d2); border: 1px solid #c4c4c4; border-radius: 2px; text-align: center; padding-top: 184px; color: #666; font-size: 8px; }
.tree-h { height: 10px; flex: none; display: flex; align-items: center; background: #f4f4f4; }
.left { border: 2.5px solid transparent; border-right: 3px solid #333; border-left: 0; margin: 0 4px; }
.hthumb { width: 127px; height: 9px; border: 1px solid #bbb; border-radius: 2px; background: linear-gradient(#eee, #cfcfcf); text-align: center; line-height: 7px; font-size: 6px; color: #666; }
.right { border: 2.5px solid transparent; border-left: 3px solid #333; border-right: 0; margin-left: 53px; }
.nav-act { height: 28px; flex: none; display: flex; justify-content: flex-end; align-items: center; padding-right: 1px; gap: 2px; }
.nav-act svg { width: 14px; height: 14px; }
.del { width: 14px; height: 14px; line-height: 14px; text-align: center; color: #b03030; font-size: 11px; border: 1px solid #ccc; }
.props { height: 12px; line-height: 12px; padding-left: 21px; color: #555; font-size: 7.5px; position: relative; flex: none; }
.tri { position: absolute; left: 8px; top: 4px; border: 3px solid transparent; border-top: 4px solid #222; border-bottom: 0; }
.propline { height: 15px; margin-top: 1px; display: flex; align-items: center; flex: none; padding-left: 0; }
.propline svg { width: 9px; height: 9px; margin-right: 1px; flex: none; }
.in { height: 13px; background: #f6f6f6; border: 1px solid #ddd; line-height: 11px; color: #555; font-size: 7.4px; }
.short { width: 44px; margin-right: 2px; }
.long { width: 156px; padding-left: 1px; }
.pbtn.params { width: 193px; height: 14px; margin: 0 0 0 9px; background: linear-gradient(#f4f4f4, #d8d8d8); border-color: #aaa; color: #555; line-height: 12px; }

.status { height: 13px; flex: none; display: flex; align-items: center; padding-left: 1px; background: #f0f0f0; font-size: 8px; color: #444; position: relative; white-space: nowrap; }
.msg { width: 1003px; flex: none; font-size: 8.15px; }
.disk, .ram { display: flex; align-items: center; gap: 5px; flex: none; }
.disk svg { width: 12px; height: 7px; }
.ram svg { width: 10px; height: 10px; }
.ram { margin-left: 18px; }
```
